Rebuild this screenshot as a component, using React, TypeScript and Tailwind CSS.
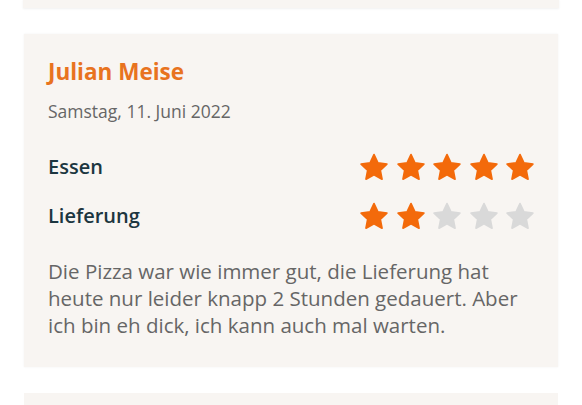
const Star = ({ filled }: { filled: boolean }) => (
  <svg width="30" height="29" viewBox="0 0 24 23" className="block">
    <path
      d="M12 1.2l3.1 6.6 7.2.9-5.3 5 1.4 7.1L12 17.3l-6.4 3.5 1.4-7.1-5.3-5 7.2-.9z"
      fill={filled ? "#f36a0b" : "#d9d9d9"}
      stroke={filled ? "#f36a0b" : "#d9d9d9"}
      strokeWidth="1.4"
      strokeLinejoin="round"
    />
  </svg>
);

const Stars = ({ value }: { value: number }) => (
  <div className="flex gap-[6.5px]">
    {[0, 1, 2, 3, 4].map((i) => (
      <Star key={i} filled={i < value} />
    ))}
  </div>
);

export default function App() {
  return (
    <div
      className="w-[582px] h-[405px] bg-white overflow-hidden"
      style={{ fontFamily: '"Open Sans", "Noto Sans", sans-serif' }}
    >
      <div className="mx-[23px] h-[9px] -mt-px bg-[#f8f5f2] shadow-[0_1px_2px_rgba(0,0,0,0.06)]" />
      <div className="mx-[24px] mt-[26px] h-[333px] bg-[#f8f5f2] shadow-[0_0_2px_rgba(0,0,0,0.06)] pl-[24px] pr-[23px] pt-[24px]">
        <div className="text-[22.5px] leading-[28px] font-bold text-[#e8731f]">
          Julian Meise
        </div>
        <div className="mt-[13px] text-[17.5px] leading-[24px] text-[#666666]">
          Samstag, 11. Juni 2022
        </div>
        <div className="mt-[29px] flex items-center justify-between h-[30px]">
          <span className="text-[20px] font-semibold text-[#1c3640]">Essen</span>
          <Stars value={5} />
        </div>
        <div className="mt-[19px] flex items-center justify-between h-[30px]">
          <span className="text-[20px] font-semibold text-[#1c3640]">Lieferung</span>
          <Stars value={2} />
        </div>
        <p className="mt-[27px] w-[480px] text-[20.5px] leading-[27px] text-[#666666]">
          Die Pizza war wie immer gut, die Lieferung hat heute nur leider knapp 2
          Stunden gedauert. Aber ich bin eh dick, ich kann auch mal warten.
        </p>
      </div>
      <div className="mx-[24px] mt-[26px] h-[40px] bg-[#f8f5f2]" />
    </div>
  );
}
